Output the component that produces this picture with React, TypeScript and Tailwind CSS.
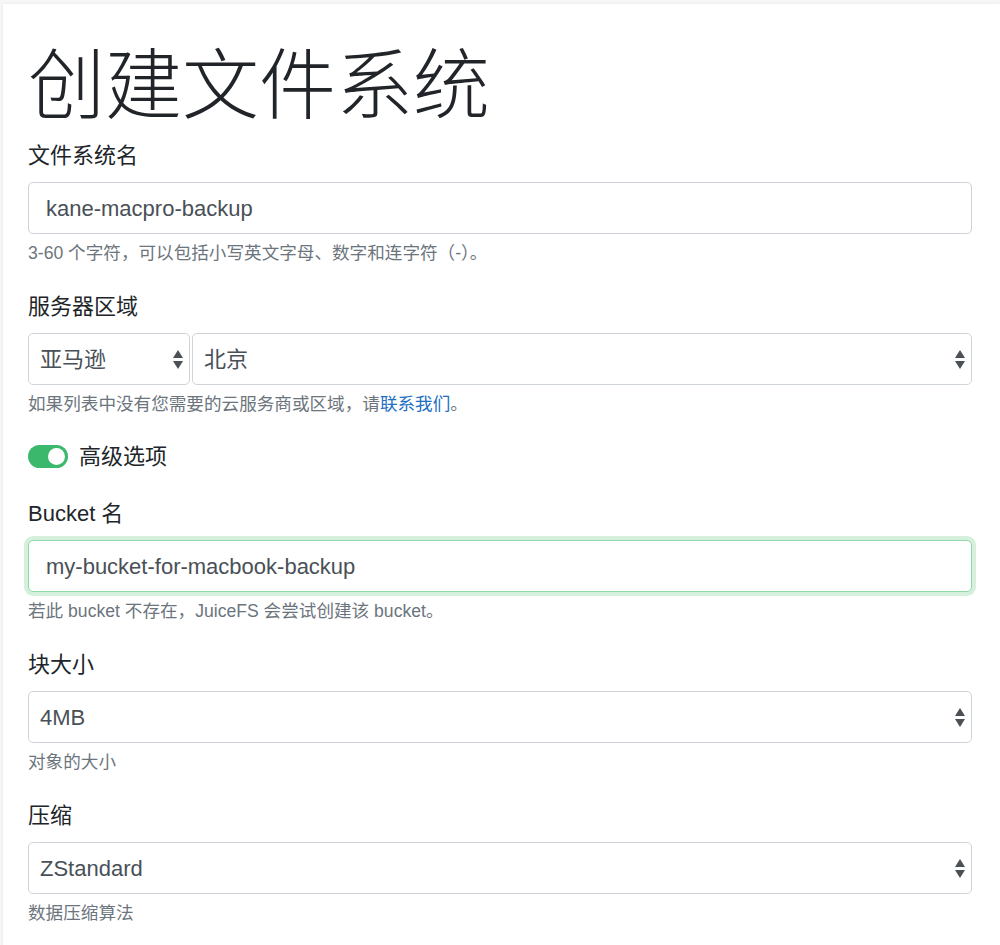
import type { ReactNode } from "react";

const SANS = "font-['Liberation_Sans','Noto_Sans_CJK_SC',sans-serif]";

function Arrows() {
  return (
    <svg width="10" height="19" viewBox="0 0 10 19" className="shrink-0">
      <polygon points="0,8 5,0 10,8" fill="#4a5056" />
      <polygon points="0,11 10,11 5,19" fill="#4a5056" />
    </svg>
  );
}

function Field({
  label,
  help,
  children,
}: {
  label: string;
  help: ReactNode;
  children: ReactNode;
}) {
  return (
    <div className="mb-[22px]">
      <div className="text-[22px] pt-[3px] leading-[31px] mb-[11px] text-[#212529]">{label}</div>
      {children}
      <div className="mt-[6px] text-[17.6px] leading-[26px] text-[#6c757d]">{help}</div>
    </div>
  );
}

function TextInput({ value, focused }: { value: string; focused?: boolean }) {
  return (
    <div
      className={
        focused
          ? "h-[52px] rounded-[5px] border border-[#8fd9a8] shadow-[0_0_0_4px_#d5f1de] bg-white flex items-center px-[17px] text-[22px] text-[#495057]"
          : "h-[52px] rounded-[5px] border border-[#ced4da] bg-white flex items-center px-[17px] text-[22px] text-[#495057]"
      }
    >
      {value}
    </div>
  );
}

function Select({ value, className }: { value: string; className?: string }) {
  return (
    <div
      className={
        "h-[52px] rounded-[5px] border border-[#ced4da] bg-white flex items-center justify-between pl-[11px] pr-[6px] text-[22px] text-[#495057] " +
        (className ?? "")
      }
    >
      <span>{value}</span>
      <Arrows />
    </div>
  );
}

export default function App() {
  return (
    <div className={`min-h-screen bg-[#f6f6f6] pl-[3px] pt-[4px] ${SANS}`}>
      <div className="bg-white shadow-[0_0_3px_rgba(0,0,0,0.07)] pl-[25px] pr-[28px] pt-[30px] pb-[30px] min-h-[941px]">
        <h1 className="font-['Noto_Sans_CJK_SC_Light','Noto_Sans_CJK_SC',sans-serif] font-light text-[77px] leading-[92px] mb-[11px] text-[#212529]">
          创建文件系统
        </h1>

        <Field label="文件系统名" help="3-60 个字符，可以包括小写英文字母、数字和连字符（-）。">
          <TextInput value="kane-macpro-backup" />
        </Field>

        <Field
          label="服务器区域"
          help={
            <>
              如果列表中没有您需要的云服务商或区域，请<span className="text-[#1e6fc3]">联系我们</span>。
            </>
          }
        >
          <div className="flex gap-[2px]">
            <Select value="亚马逊" className="w-[162px]" />
            <Select value="北京" className="flex-1" />
          </div>
        </Field>

        <div className="mb-[22px] h-[34px] flex items-center gap-[11px] pt-[1px]">
          <div className="w-[40px] h-[23px] rounded-full bg-[#3bb86c] flex items-center justify-end pr-[3px]">
            <div className="w-[17px] h-[17px] rounded-full bg-white" />
          </div>
          <span className="text-[22px] text-[#212529]">高级选项</span>
        </div>

        <Field label="Bucket 名" help="若此 bucket 不存在，JuiceFS 会尝试创建该 bucket。">
          <TextInput value="my-bucket-for-macbook-backup" focused />
        </Field>

        <Field label="块大小" help="对象的大小">
          <Select value="4MB" />
        </Field>

        <Field label="压缩" help="数据压缩算法">
          <Select value="ZStandard" />
        </Field>
      </div>
    </div>
  );
}
